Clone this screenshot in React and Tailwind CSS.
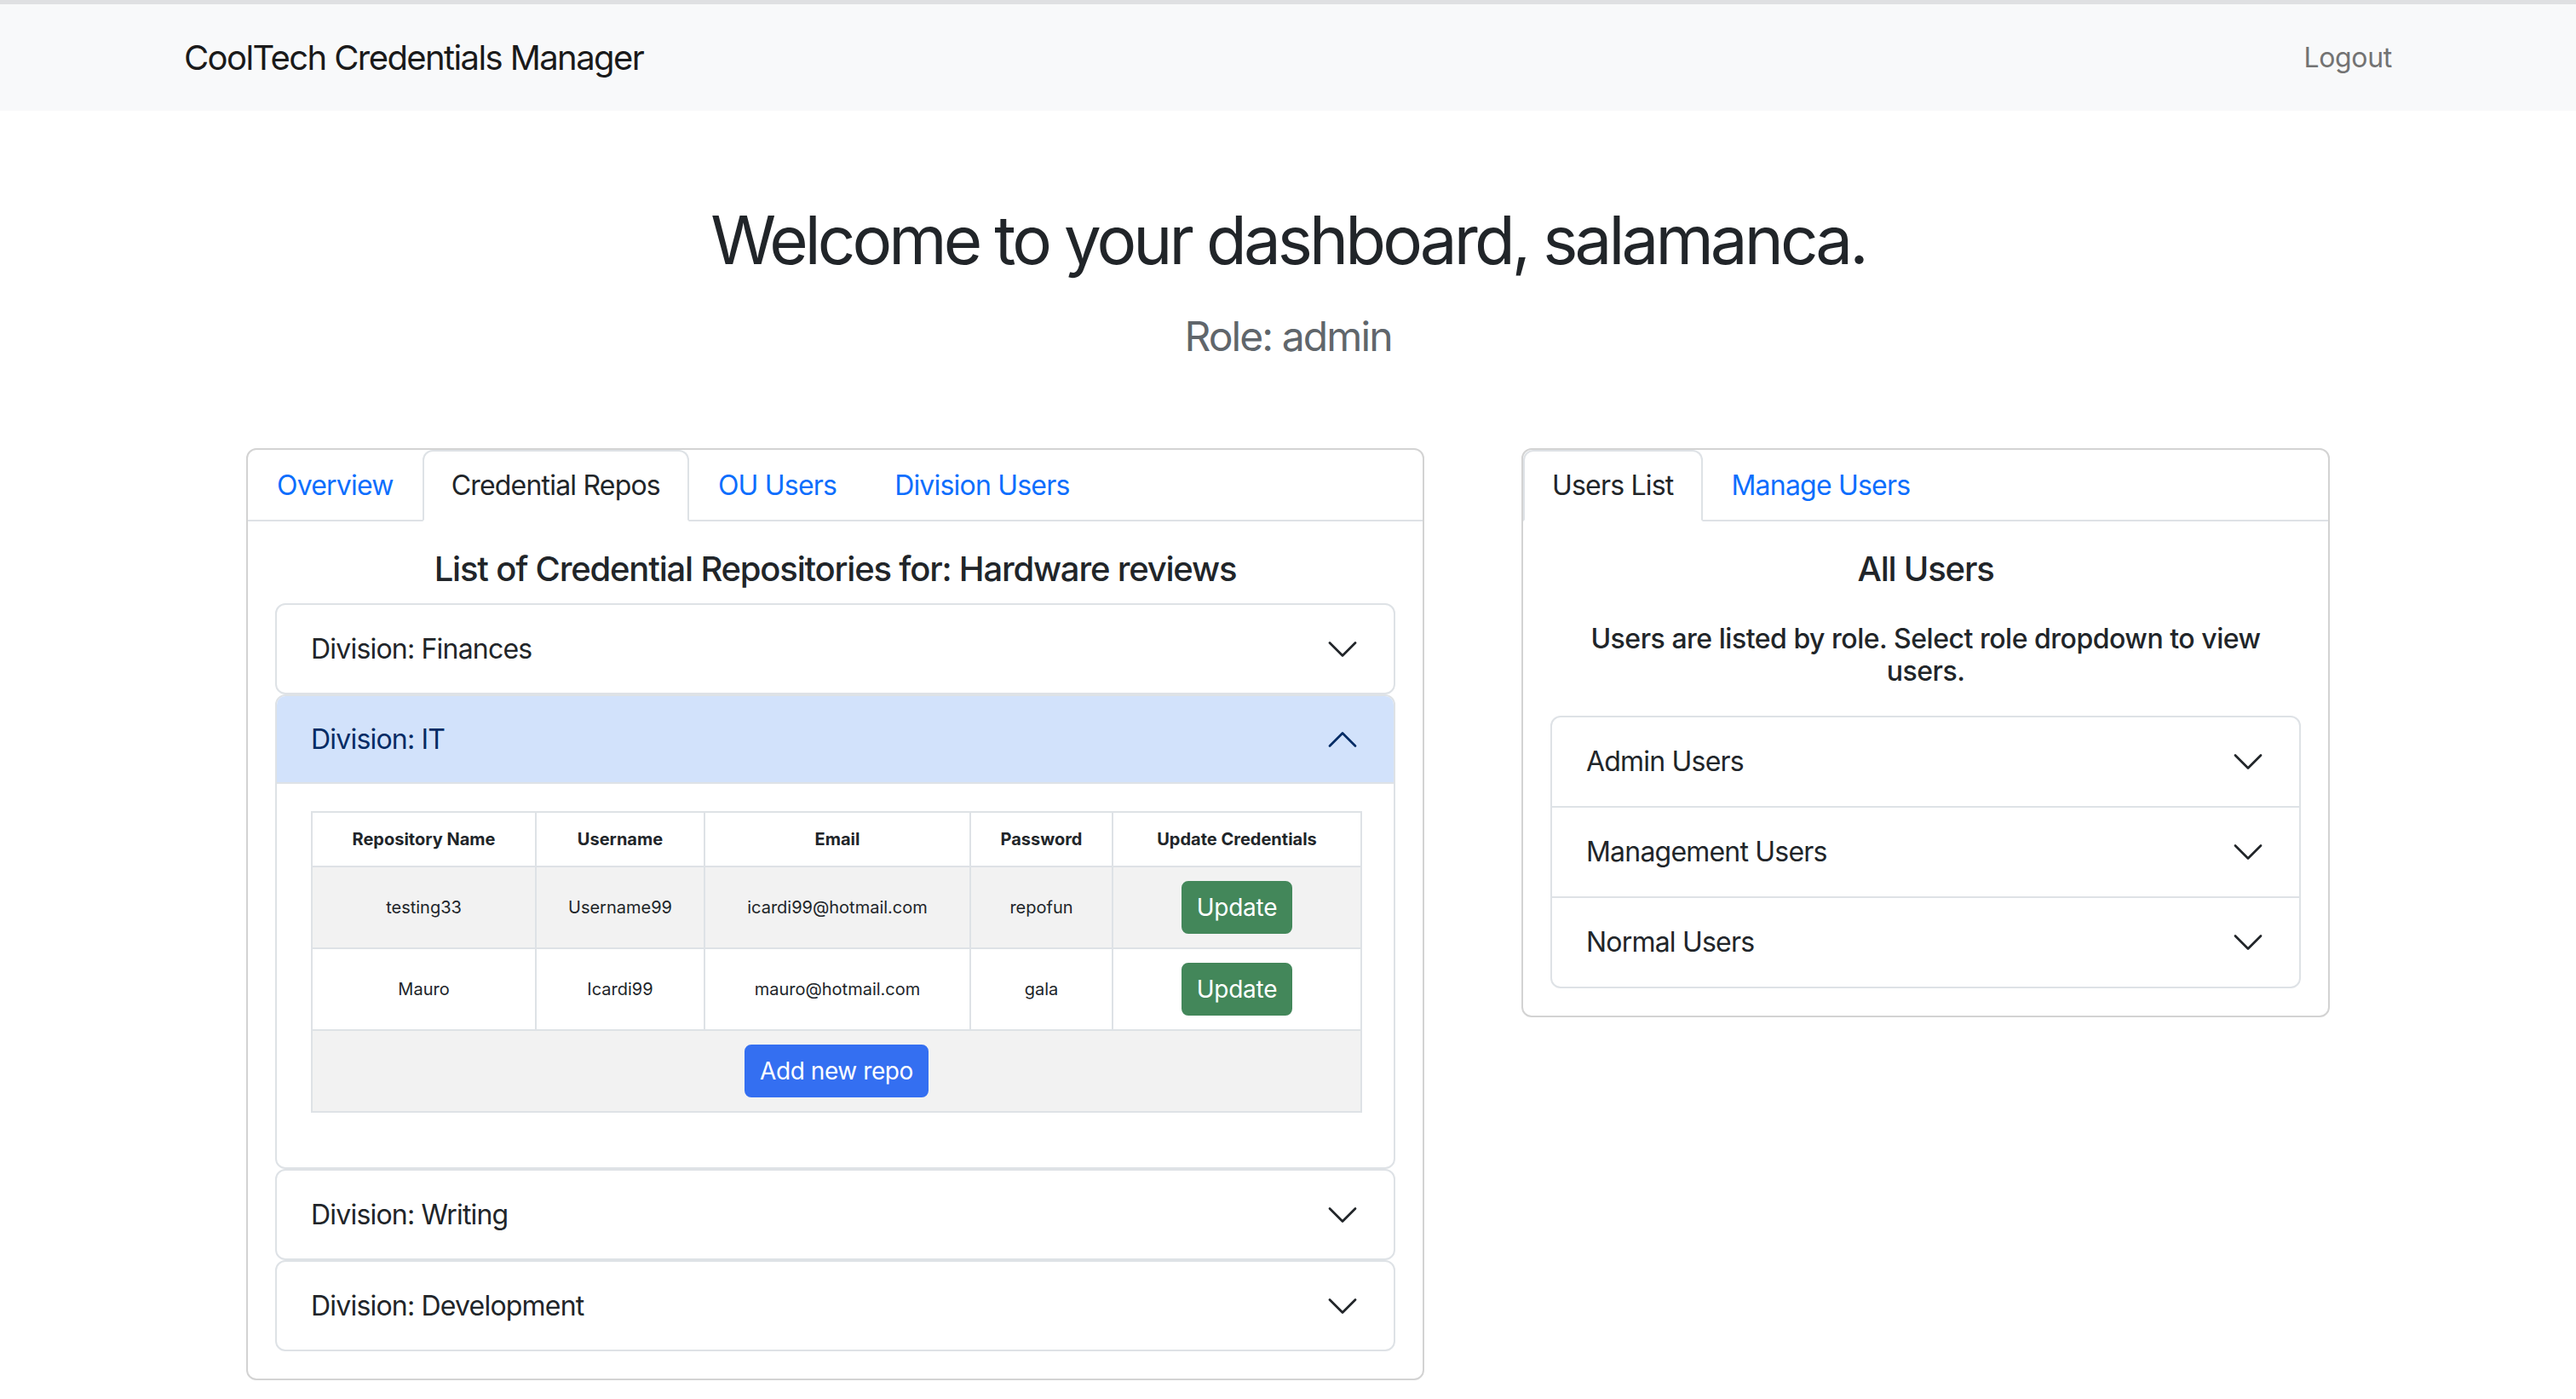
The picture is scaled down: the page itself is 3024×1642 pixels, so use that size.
import React from 'react';

const Chevron = ({ up = false }) => (
  <svg
    viewBox="0 0 16 16"
    width="40"
    height="40"
    fill="none"
    stroke={up ? '#052c65' : '#212529'}
    strokeWidth="1.1"
    strokeLinecap="round"
    strokeLinejoin="round"
    className={up ? 'shrink-0 rotate-180' : 'shrink-0'}
  >
    <path d="M2 5L8 11L14 5" />
  </svg>
);

const Tabs = ({ items, active }) => (
  <div className="flex items-end border-b-2 border-[#dee2e6]">
    {items.map((t) => (
      <div
        key={t}
        className={
          t === active
            ? '-mb-[2px] rounded-t-[12px] border-2 border-[#dee2e6] border-b-white bg-white px-[32px] py-[16px] text-[32px] leading-[48px] tracking-[-0.025em] text-[#212529]'
            : '-mb-[2px] rounded-t-[12px] border-2 border-transparent px-[32px] py-[16px] text-[32px] leading-[48px] tracking-[-0.025em] text-[#0d6efd]'
        }
      >
        {t}
      </div>
    ))}
  </div>
);

const DivisionItem = ({ label, open = false, children }) => (
  <div className="overflow-hidden rounded-[12px] border-2 border-[#dee2e6] bg-white">
    <div
      className={
        open
          ? 'flex h-[103px] items-center justify-between border-b-2 border-[#dee2e6] bg-[#d2e2fb] px-[40px] text-[32px] tracking-[-0.025em] text-[#052c65]'
          : 'flex h-[103px] items-center justify-between px-[40px] text-[32px] tracking-[-0.025em] text-[#212529]'
      }
    >
      <span>{label}</span>
      <Chevron up={open} />
    </div>
    {open && children}
  </div>
);

const repos = [
  { name: 'testing33', user: 'Username99', email: 'icardi99@hotmail.com', pass: 'repofun' },
  { name: 'Mauro', user: 'Icardi99', email: 'mauro@hotmail.com', pass: 'gala' },
];

const cell = 'border-2 border-[#dee2e6] px-[16px] text-center align-middle';

const RepoTable = () => (
  <table className="mb-[32px] w-full table-fixed border-collapse text-[20px] leading-[30px] text-[#212529]">
    <thead>
      <tr className="h-[64px] bg-white">
        <th className={`${cell} w-[263px] font-bold`}>Repository Name</th>
        <th className={`${cell} w-[198px] font-bold`}>Username</th>
        <th className={`${cell} w-[312px] font-bold`}>Email</th>
        <th className={`${cell} w-[167px] font-bold`}>Password</th>
        <th className={`${cell} w-[292px] font-bold`}>Update Credentials</th>
      </tr>
    </thead>
    <tbody>
      {repos.map((r, i) => (
        <tr key={r.name} className={i % 2 === 0 ? 'h-[96px] bg-[#f2f2f2]' : 'h-[96px] bg-white'}>
          <td className={cell}>{r.name}</td>
          <td className={cell}>{r.user}</td>
          <td className={cell}>{r.email}</td>
          <td className={cell}>{r.pass}</td>
          <td className={cell}>
            <button className="rounded-[8px] border-2 border-[#43875a] bg-[#43875a] px-[16px] py-[8px] text-[28px] leading-[42px] tracking-[-0.01em] text-white">
              Update
            </button>
          </td>
        </tr>
      ))}
      <tr className="h-[96px] bg-[#f2f2f2]">
        <td colSpan={5} className={cell}>
          <button className="rounded-[8px] border-2 border-[#346ff1] bg-[#346ff1] px-[16px] py-[8px] text-[28px] leading-[42px] tracking-[-0.015em] text-white">
            Add new repo
          </button>
        </td>
      </tr>
    </tbody>
  </table>
);

const roles = ['Admin Users', 'Management Users', 'Normal Users'];

export default function App() {
  return (
    <div className="bg-white font-[Inter,sans-serif] text-[#212529]">
      <div className="h-[5px] bg-[#dfe0e2]" />
      <nav className="flex h-[125px] items-center justify-between bg-[#f8f9fa] px-[216px]">
        <span className="text-[40px] leading-[60px] tracking-[-0.04em] text-[#1a1a1a]">CoolTech Credentials Manager</span>
        <span className="text-[32px] leading-[48px] tracking-[-0.01em] text-[#737373]">Logout</span>
      </nav>

      <main className="flex flex-col items-center pb-[12px]">
        <h1 className="mt-[104px] text-[78px] leading-[96px] font-normal tracking-[-0.05em]">
          Welcome to your dashboard, salamanca.
        </h1>
        <h4 className="mt-[36px] text-[48px] leading-[58px] tracking-[-0.04em] text-[#60666b]">Role: admin</h4>

        <div className="mt-[102px] flex items-start gap-[114px]">
          <section className="w-[1383px] rounded-[12px] border-2 border-[#d3d3d3] bg-white">
            <Tabs items={['Overview', 'Credential Repos', 'OU Users', 'Division Users']} active="Credential Repos" />
            <div className="p-[32px]">
              <h5 className="mb-[16px] text-center text-[40px] leading-[48px] font-medium tracking-[-0.03em]">
                List of Credential Repositories for: Hardware reviews
              </h5>
              <DivisionItem label="Division: Finances" />
              <DivisionItem label="Division: IT" open>
                <div className="px-[40px] pt-[32px] pb-[32px]">
                  <RepoTable />
                </div>
              </DivisionItem>
              <DivisionItem label="Division: Writing" />
              <DivisionItem label="Division: Development" />
            </div>
          </section>

          <section className="w-[949px] rounded-[12px] border-2 border-[#d3d3d3] bg-white">
            <Tabs items={['Users List', 'Manage Users']} active="Users List" />
            <div className="p-[32px]">
              <h5 className="text-center text-[40px] leading-[48px] font-medium tracking-[-0.03em]">All Users</h5>
              <h6 className="mt-[39px] mb-[33px] text-center text-[32px] leading-[38px] font-medium tracking-[-0.015em]">
                Users are listed by role. Select role dropdown to view
                <br />
                users.
              </h6>
              <div className="overflow-hidden rounded-[12px] border-2 border-[#dee2e6]">
                {roles.map((r, i) => (
                  <div
                    key={r}
                    className={
                      i === 0
                        ? 'flex h-[104px] items-center justify-between px-[40px] text-[32px] tracking-[-0.025em]'
                        : 'flex h-[106px] items-center justify-between border-t-2 border-[#dee2e6] px-[40px] text-[32px] tracking-[-0.025em]'
                    }
                  >
                    <span>{r}</span>
                    <Chevron />
                  </div>
                ))}
              </div>
            </div>
          </section>
        </div>
      </main>
    </div>
  );
}
